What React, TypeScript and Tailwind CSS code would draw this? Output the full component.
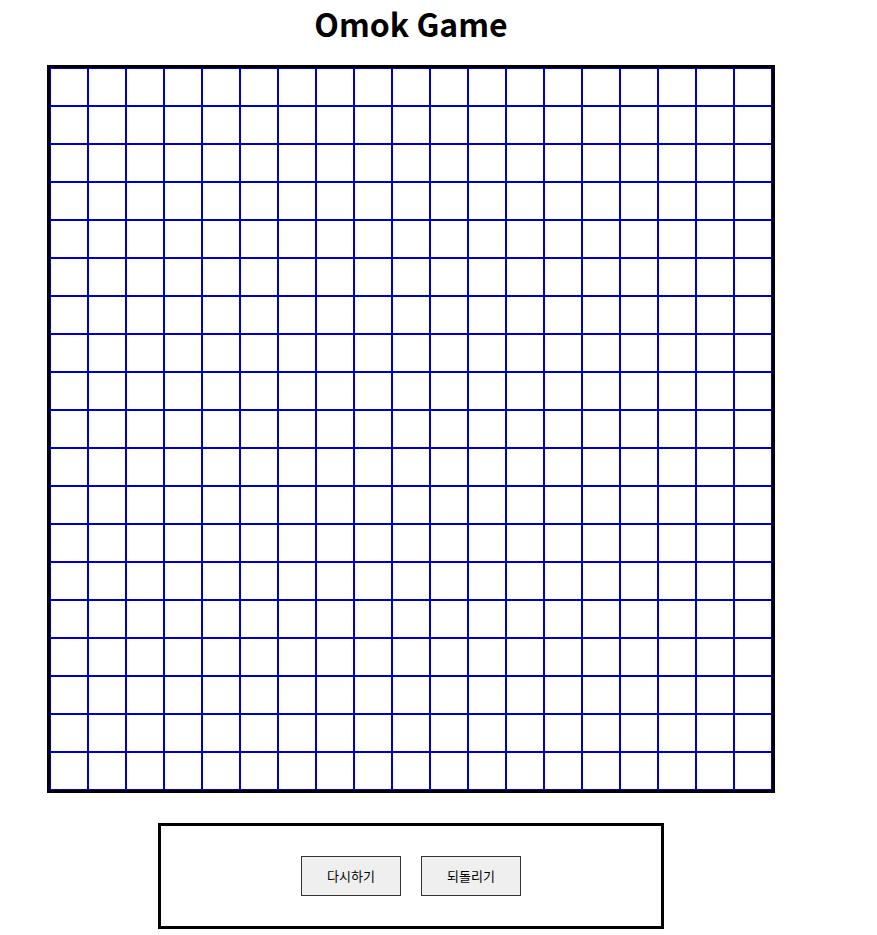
import React from "react";

const N = 19;

export default function App() {
  const cells = Array.from({ length: N * N });
  return (
    <div className="min-h-screen bg-white" style={{ fontFamily: '"Noto Sans CJK KR", "Noto Sans", sans-serif' }}>
      <div className="ml-[47px] flex w-[728px] flex-col items-center">
        <h1 className="h-[46px] text-[32px] font-bold leading-[46px] text-black">Omok Game</h1>
        <div className="mt-[19px] box-content grid w-[722px] grid-cols-[repeat(19,38px)] border-[3px] border-black">
          {cells.map((_, i) => (
            <div key={i} className="h-[38px] w-[38px] border border-[#0000cd]" />
          ))}
        </div>
        <div className="mt-[30px] flex h-[106px] w-[506px] items-center justify-center gap-[20px] border-[3px] border-black">
          <button className="h-[40px] w-[100px] border border-[#333] bg-[#efefef] text-[13px] text-black">다시하기</button>
          <button className="h-[40px] w-[100px] border border-[#333] bg-[#efefef] text-[13px] text-black">되돌리기</button>
        </div>
      </div>
    </div>
  );
}
